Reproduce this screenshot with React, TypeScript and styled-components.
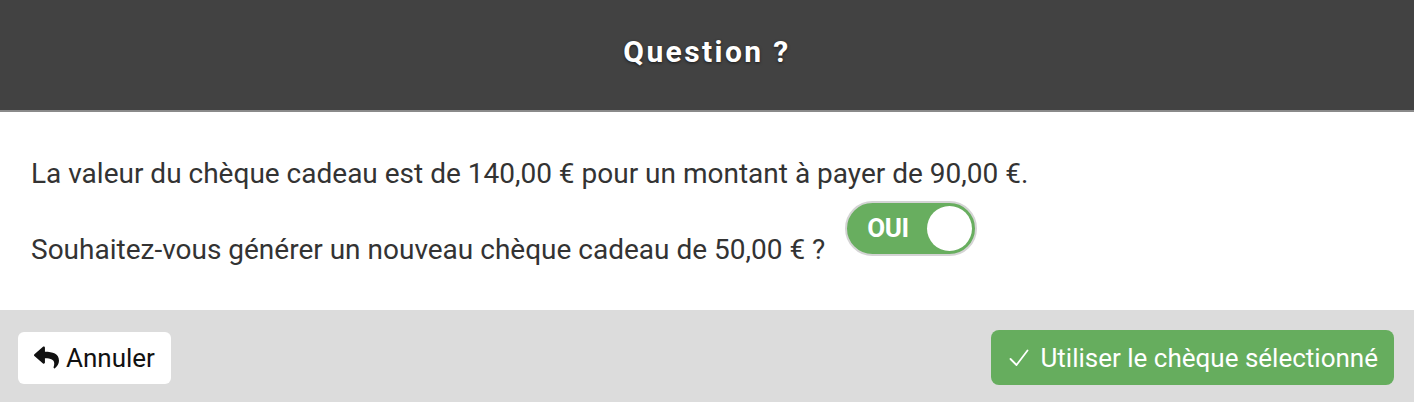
import styled, { createGlobalStyle } from 'styled-components';
import { FaReply } from 'react-icons/fa';

const GlobalStyle = createGlobalStyle`
  html, body {
    margin: 0;
    padding: 0;
    background: #ffffff;
    font-family: Roboto, "Liberation Sans", sans-serif;
  }
`;

const Dialog = styled.div`
  width: 1414px;
  height: 402px;
  display: flex;
  flex-direction: column;
`;

const Header = styled.header`
  height: 112px;
  padding-bottom: 8px;
  box-sizing: border-box;
  display: flex;
  align-items: center;
  justify-content: center;
  background-color: #424242;
  border-bottom: 2px solid #8a8a8a;
`;

const Title = styled.h1`
  margin: 0;
  color: #ffffff;
  font-size: 30px;
  font-weight: 700;
  letter-spacing: 2.4px;
  text-shadow: 0 1px 3px rgba(0, 0, 0, 0.6);
`;

const Body = styled.section`
  flex: 1;
  padding: 45px 31px 0;
  color: #333333;
  font-size: 28px;
  line-height: 33px;
`;

const Line = styled.p`
  margin: 0;
  display: flex;
  align-items: flex-end;
  gap: 20px;
  & + & {
    margin-top: 11px;
  }
`;

const Toggle = styled.button<{ on: boolean }>`
  position: relative;
  width: 132px;
  height: 55px;
  margin-bottom: 10px;
  padding: 0 0 0 20px;
  box-sizing: border-box;
  display: flex;
  align-items: center;
  border: 2px solid #d4d4d4;
  border-radius: 28px;
  background-color: ${(p) => (p.on ? '#68ae5f' : '#cccccc')};
  color: #ffffff;
  font: inherit;
  font-size: 26px;
  font-weight: 700;
  letter-spacing: -0.5px;
  cursor: pointer;

  &::after {
    content: '';
    position: absolute;
    right: 3px;
    top: 3px;
    width: 45px;
    height: 45px;
    border-radius: 50%;
    background: #ffffff;
  }
`;

const Footer = styled.footer`
  height: 92px;
  padding: 0 20px 0 18px;
  display: flex;
  align-items: center;
  justify-content: space-between;
  background-color: #dcdcdc;
`;

const Button = styled.button<{ kind: 'primary' | 'secondary' }>`
  display: inline-flex;
  align-items: center;
  border: none;
  font: inherit;
  font-size: 26px;
  cursor: pointer;
  gap: ${(p) => (p.kind === 'primary' ? '11px' : '7px')};
  border-radius: ${(p) => (p.kind === 'primary' ? '8px' : '6px')};
  height: ${(p) => (p.kind === 'primary' ? '55px' : '52px')};
  margin-top: ${(p) => (p.kind === 'primary' ? '3px' : '3px')};
  padding: ${(p) => (p.kind === 'primary' ? '0 16px 0 18px' : '0 16px 0 16px')};
  color: ${(p) => (p.kind === 'primary' ? '#ffffff' : '#111111')};
  background-color: ${(p) => (p.kind === 'primary' ? '#66ad5e' : '#ffffff')};
`;

const CheckIcon = () => (
  <svg width="20" height="18" viewBox="0 0 20 18" fill="none">
    <path d="M1.5 10 L7.5 16 L18.5 1.5" stroke="#ffffff" strokeWidth="1.8" strokeLinecap="round" strokeLinejoin="round" />
  </svg>
);

export default function App() {
  return (
    <>
      <GlobalStyle />
      <Dialog>
        <Header>
          <Title>Question ?</Title>
        </Header>
        <Body>
          <Line>La valeur du chèque cadeau est de 140,00 € pour un montant à payer de 90,00 €.</Line>
          <Line>
            Souhaitez-vous générer un nouveau chèque cadeau de 50,00 € ?
            <Toggle on>OUI</Toggle>
          </Line>
        </Body>
        <Footer>
          <Button kind="secondary">
            <FaReply size={25} />
            Annuler
          </Button>
          <Button kind="primary">
            <CheckIcon />
            Utiliser le chèque sélectionné
          </Button>
        </Footer>
      </Dialog>
    </>
  );
}
